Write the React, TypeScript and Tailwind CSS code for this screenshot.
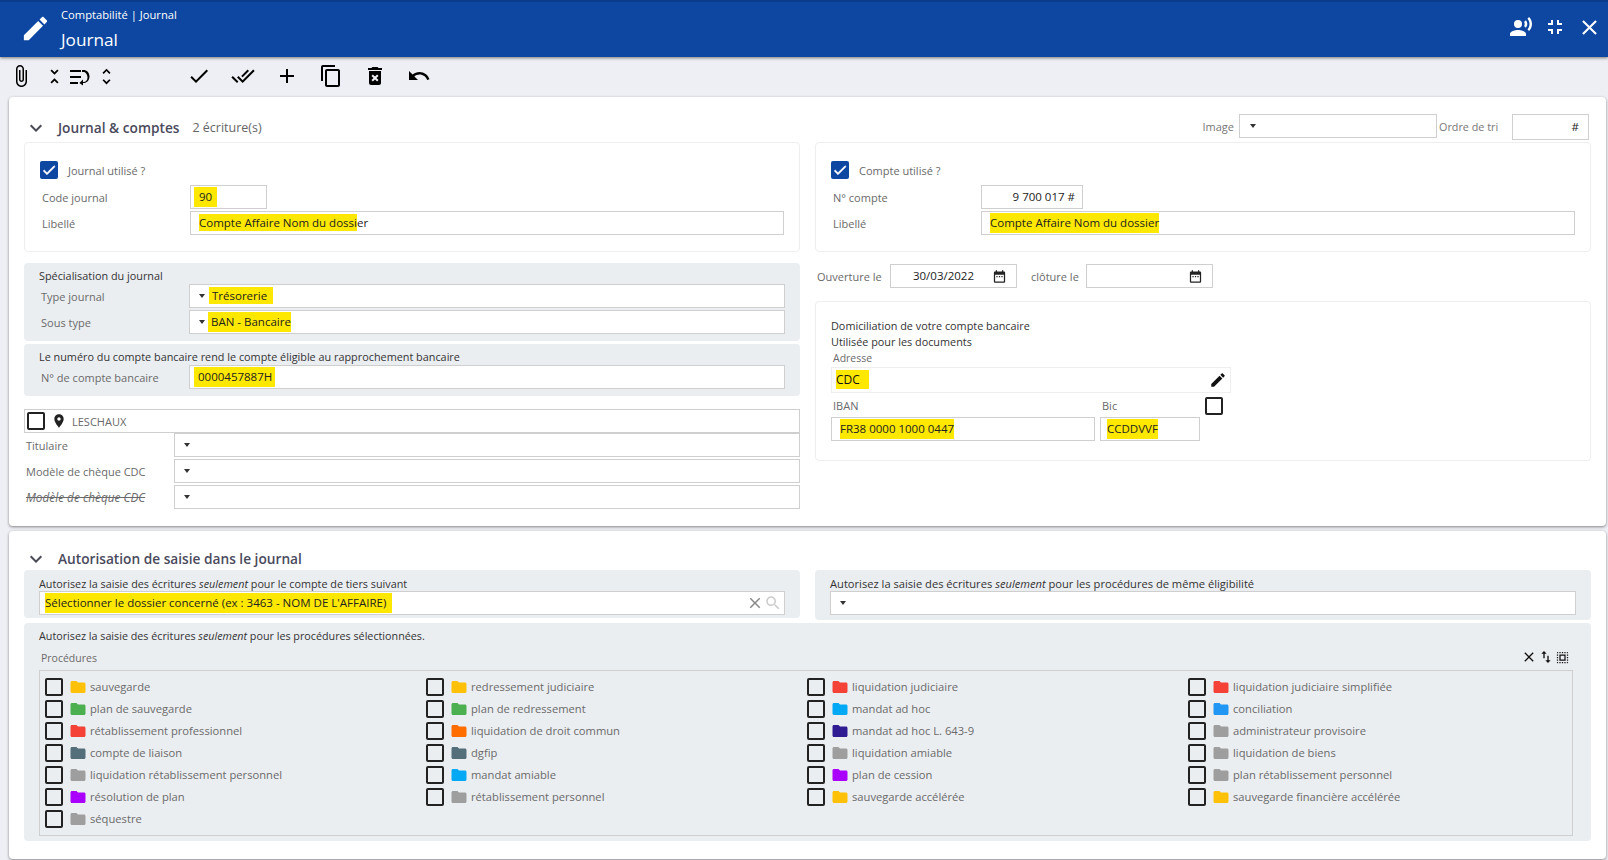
import React from "react";

const P: Record<string, string> = {
  edit: "M3 17.25V21h3.75L17.81 9.94l-3.75-3.75L3 17.25zM20.71 7.04c.39-.39.39-1.02 0-1.41l-2.34-2.34c-.39-.39-1.02-.39-1.41 0l-1.83 1.83 3.75 3.75 1.83-1.83z",
  voice: "M9 5a4 4 0 1 0 0 8a4 4 0 1 0 0-8z M9 15c-2.67 0-8 1.34-8 4v2h16v-2c0-2.66-5.33-4-8-4zm7.76-9.64l-1.68 1.69c.84 1.18.84 2.71 0 3.89l1.68 1.69c2.02-2.02 2.02-5.07 0-7.27zM20.07 2l-1.63 1.63c2.77 3.02 2.77 7.56 0 10.74L20.07 16c3.9-3.89 3.91-9.95 0-14z",
  fsExit: "M5 16h3v3h2v-5H5v2zm3-8H5v2h5V5H8v3zm6 11h2v-3h3v-2h-5v5zm2-11V5h-2v5h5V8h-3z",
  close: "M19 6.41L17.59 5 12 10.59 6.41 5 5 6.41 10.59 12 5 17.59 6.41 19 12 13.41 17.59 19 19 17.59 13.41 12z",
  attach: "M16.5 6v11.5c0 2.21-1.79 4-4 4s-4-1.79-4-4V5c0-1.38 1.12-2.5 2.5-2.5s2.5 1.12 2.5 2.5v10.5c0 .55-.45 1-1 1s-1-.45-1-1V6H10v9.5c0 1.38 1.12 2.5 2.5 2.5s2.5-1.12 2.5-2.5V5c0-2.21-1.79-4-4-4S7 2.79 7 5v12.5c0 3.04 2.46 5.5 5.5 5.5s5.5-2.46 5.5-5.5V6h-1.5z",
  unfoldLess: "M7.41 18.59L8.83 20 12 16.83 15.17 20l1.41-1.41L12 14l-4.59 4.59zm9.18-13.18L15.17 4 12 7.17 8.83 4 7.41 5.41 12 10l4.59-4.59z",
  wrap: "M2 6h11v2H2zM2 12h11v2H2zM2 18h8v2H2zM14 6h1.5c3.3 0 6 2.7 6 6.5s-2.7 6.5-6 6.5H15v2.6L11.4 19 15 15.4V18h.5c2.2 0 4-1.7 4-4.5S17.700 8 15.500 8H14z",
  unfoldMore: "M12 5.83L15.17 9l1.41-1.41L12 3 7.41 7.59 8.83 9 12 5.83zm0 12.34L8.83 15l-1.41 1.41L12 21l4.59-4.59L15.17 15 12 18.17z",
  check: "M9 16.17L4.83 12l-1.42 1.41L9 19 21 7l-1.41-1.41z",
  doneAll: "M18 7l-1.41-1.41-6.34 6.34 1.41 1.41L18 7zm4.24-1.41L11.66 16.17 7.48 12l-1.41 1.41L11.66 19l12-12-1.42-1.41zM.41 13.41L6 19l1.41-1.41L1.83 12 .41 13.41z",
  add: "M19 13h-6v6h-2v-6H5v-2h6V5h2v6h6v2z",
  copy: "M16 1H4c-1.1 0-2 .9-2 2v14h2V3h12V1zm3 4H8c-1.1 0-2 .9-2 2v14c0 1.1.9 2 2 2h11c1.1 0 2-.9 2-2V7c0-1.1-.9-2-2-2zm0 16H8V7h11v14z",
  del: "M6 19c0 1.1.9 2 2 2h8c1.1 0 2-.9 2-2V7H6v12zm2.46-7.12l1.41-1.41L12 12.59l2.12-2.12 1.41 1.41L13.41 14l2.12 2.12-1.41 1.41L12 15.41l-2.12 2.12-1.41-1.41L10.59 14l-2.13-2.12zM15.5 4l-1-1h-5l-1 1H5v2h14V4z",
  undo: "M12.5 8c-2.65 0-5.05.99-6.9 2.6L2 7v9h9l-3.62-3.62c1.39-1.16 3.16-1.88 5.12-1.88 3.54 0 6.55 2.31 7.6 5.5l2.37-.78C21.08 11.03 17.15 8 12.5 8z",
  expand: "M16.59 8.59L12 13.17 7.41 8.59 6 10l6 6 6-6z",
  place: "M12 2C8.13 2 5 5.13 5 9c0 5.25 7 13 7 13s7-7.75 7-13c0-3.87-3.13-7-7-7zm0 9.5c-1.38 0-2.5-1.12-2.5-2.5s1.12-2.5 2.5-2.5 2.5 1.12 2.5 2.5-1.12 2.5-2.5 2.5z",
  folder: "M10 4H4c-1.1 0-1.99.9-1.99 2L2 18c0 1.1.9 2 2 2h16c1.1 0 2-.9 2-2V8c0-1.1-.9-2-2-2h-8l-2-2z",
  date: "M9 11H7v2h2v-2zm4 0h-2v2h2v-2zm4 0h-2v2h2v-2zm2-7h-1V2h-2v2H8V2H6v2H5c-1.11 0-1.99.9-1.99 2L3 20c0 1.1.89 2 2 2h14c1.1 0 2-.9 2-2V6c0-1.1-.9-2-2-2zm0 16H5V9h14v11z",
  swap: "M16 17.01V10h-2v7.01h-3L15 21l4-3.99h-3zM9 3L5 6.99h3V14h2V6.99h3L9 3z",
  selectAll: "M3 5h2V3c-1.1 0-2 .9-2 2zm0 8h2v-2H3v2zm4 8h2v-2H7v2zM3 9h2V7H3v2zm10-6h-2v2h2V3zm6 0v2h2c0-1.1-.9-2-2-2zM5 21v-2H3c0 1.1.9 2 2 2zm-2-4h2v-2H3v2zM9 3H7v2h2V3zm2 18h2v-2h-2v2zm8-8h2v-2h-2v2zm0 8c1.1 0 2-.9 2-2h-2v2zm0-12h2V7h-2v2zm0 8h2v-2h-2v2zm-4 4h2v-2h-2v2zm0-16h2V3h-2v2zM7 17h10V7H7v10zm2-8h6v6H9V9z",
  search: "M15.5 14h-.79l-.28-.27C15.41 12.59 16 11.11 16 9.5 16 5.91 13.09 3 9.5 3S3 5.91 3 9.5 5.91 16 9.5 16c1.61 0 3.09-.59 4.23-1.57l.27.28v.79l5 4.99L20.49 19l-4.99-5zm-6 0C7.01 14 5 11.99 5 9.5S7.01 5 9.5 5 14 7.01 14 9.5 11.99 14 9.5 14z",
};

function Icon({ d, size = 24, color = "#000", bold = false }: { d: string; size?: number; color?: string; bold?: boolean }) {
  return (
    <svg width={size} height={size} viewBox="0 0 24 24" fill={color} className="shrink-0">
      <path d={P[d]} fillRule="evenodd" stroke={bold ? color : "none"} strokeWidth={bold ? 1 : 0} />
    </svg>
  );
}

function Hl({ children, className = "" }: { children: React.ReactNode; className?: string }) {
  return <span className={"bg-[#ffe800] py-[1px] " + className}>{children}</span>;
}

function Arrow() {
  return <span className="shrink-0 w-0 h-0 ml-[1px] border-x-[3.5px] border-x-transparent border-t-[4px] border-t-[#333]" />;
}

function Box({ className = "", children }: { className?: string; children?: React.ReactNode }) {
  return (
    <div className={"h-[24px] bg-white border border-[#cfcfcf] flex items-center text-[#222] whitespace-nowrap " + className}>
      {children}
    </div>
  );
}

function Select({ className = "", children }: { className?: string; children?: React.ReactNode }) {
  return (
    <Box className={"pl-[8px] gap-[3px] " + className}>
      <Arrow />
      {children}
    </Box>
  );
}

function Check({ on = false }: { on?: boolean }) {
  return on ? (
    <span className="shrink-0 w-[18px] h-[18px] rounded-[2px] bg-[#0d47a1] flex items-center justify-center">
      <Icon d="check" size={16} color="#fff" bold />
    </span>
  ) : (
    <span className="block shrink-0 w-[18px] h-[18px] rounded-[2px] border-2 border-[#222] bg-transparent" />
  );
}

function Label({ className = "", children }: { className?: string; children: React.ReactNode }) {
  return <div className={"text-[#6a6a6a] text-[11px] whitespace-nowrap pt-[2px] " + className}>{children}</div>;
}

function Row({ label, x = "pl-[17px]", w, children }: { label: React.ReactNode; x?: string; w: string; children: React.ReactNode }) {
  return (
    <div className="flex items-center h-[24px] mb-[2px]">
      <Label className={x + " " + w}>{label}</Label>
      {children}
    </div>
  );
}

function Section({ title, extra, right }: { title: string; extra?: string; right?: React.ReactNode }) {
  return (
    <div className="flex items-center">
      <span className="w-[34px]"><Icon d="expand" size={24} color="#4a4a56" /></span>
      <span className="font-semibold text-[13.7px] pt-[1px] text-[#4a4a5c] whitespace-nowrap">{title}</span>
      {extra && <span className="ml-[13px] pt-[1px] text-[12.5px] text-[#666]">{extra}</span>}
      {right}
    </div>
  );
}

const Note = "h-[21px] pt-[5px] leading-[16px] text-[#333] text-[10.85px] whitespace-nowrap";

const cols: [string, string][] = [
  ["sauvegarde", "#ffc107"], ["redressement judiciaire", "#ffc107"], ["liquidation judiciaire", "#f44336"], ["liquidation judiciaire simplifiée", "#f44336"],
  ["plan de sauvegarde", "#4caf50"], ["plan de redressement", "#4caf50"], ["mandat ad hoc", "#03a9f4"], ["conciliation", "#2196f3"],
  ["rétablissement professionnel", "#f44336"], ["liquidation de droit commun", "#ff6d00"], ["mandat ad hoc L. 643-9", "#311b92"], ["administrateur provisoire", "#9e9e9e"],
  ["compte de liaison", "#546e7a"], ["dgfip", "#546e7a"], ["liquidation amiable", "#9e9e9e"], ["liquidation de biens", "#9e9e9e"],
  ["liquidation rétablissement personnel", "#9e9e9e"], ["mandat amiable", "#03a9f4"], ["plan de cession", "#aa00ff"], ["plan rétablissement personnel", "#9e9e9e"],
  ["résolution de plan", "#aa00ff"], ["rétablissement personnel", "#9e9e9e"], ["sauvegarde accélérée", "#ffc107"], ["sauvegarde financière accélérée", "#ffc107"],
  ["séquestre", "#9e9e9e"],
];

export default function App() {
  return (
    <div className="w-[1608px] h-[860px] overflow-hidden bg-[#eeeff4] font-['Open_Sans',sans-serif] text-[11.5px] text-[#333]">
      {/* Header */}
      <header className="h-[57px] bg-[#0d47a1] border-t-2 border-[#0b3d8c] shadow-[0_1px_3px_rgba(0,0,0,0.5)] flex items-center text-white relative">
        <div className="ml-[20px] w-[41px] mt-[-2px]"><Icon d="edit" size={31} color="#fff" /></div>
        <div className="flex flex-col">
          <span className="text-[11.2px] leading-[16px] mt-[-1px]">Comptabilité | Journal</span>
          <span className="text-[17.2px] leading-[24px] mt-[5px]">Journal</span>
        </div>
        <div className="ml-auto flex items-center mt-[-5px] mr-[2px]">
          <span className="w-[34px] flex justify-center"><Icon d="voice" size={24} color="#fff" /></span>
          <span className="w-[34px] flex justify-center"><Icon d="fsExit" size={24} color="#fff" /></span>
          <span className="w-[34px] flex justify-center"><Icon d="close" size={25} color="#fff" /></span>
        </div>
      </header>

      {/* Toolbar */}
      <div className="h-[40px] flex items-center pb-[2px]">
        <span className="ml-[7px] w-[28px] flex justify-center"><Icon d="attach" size={24} /></span>
        <span className="ml-[7px] w-[24px] flex justify-center"><Icon d="unfoldLess" size={21} /></span>
        <span className="w-[28px] flex justify-center"><Icon d="wrap" size={24} /></span>
        <span className="w-[24px] flex justify-center"><Icon d="unfoldMore" size={21} /></span>
        <div className="ml-[59px] flex">
          {["check", "doneAll", "add", "copy", "del", "undo"].map((n) => (
            <span key={n} className="w-[44px] flex justify-center"><Icon d={n} size={24} /></span>
          ))}
        </div>
      </div>

      {/* Card 1 */}
      <section className="ml-[9px] w-[1597px] h-[429px] bg-white rounded-[4px] shadow-[0_1px_3px_rgba(0,0,0,0.45)] px-[15px]">
        <div className="h-[45px] pt-[18px]">
          <Section
            title="Journal & comptes"
            extra="2 écriture(s)"
            right={
              <div className="ml-auto flex items-center mt-[-3px] mr-[2px]">
                <span className="text-[#777] text-[11px] mr-[5px] pt-[3px]">Image</span>
                <Select className="w-[198px] pl-[9px]" />
                <span className="text-[#777] text-[10.8px] ml-[2px] w-[73px] pt-[3px]">Ordre de tri</span>
                <Box className="w-[77px] h-[26px] mt-[2px] justify-end pr-[9px]">#</Box>
              </div>
            }
          />
        </div>

        <div className="grid grid-cols-2 gap-x-[15px]">
          {/* Left column */}
          <div>
            <div className="h-[110px] border border-[#eee] rounded-[4px] pt-[18px] pr-[15px]">
              <div className="flex items-center ml-[15px] h-[18px] mb-[6px]">
                <Check on />
                <Label className="ml-[10px]">Journal utilisé ?</Label>
              </div>
              <Row label="Code journal" w="w-[165px]"><Box className="w-[77px] pl-[8px]"><Hl className="ml-[-5px] px-[5px]">90</Hl></Box></Row>
              <Row label="Libellé" w="w-[165px]">
                <Box className="flex-1 pl-[8px]"><span><Hl>Compte Affaire Nom du dossi</Hl>er</span></Box>
              </Row>
            </div>

            <div className="mt-[11px] h-[78px] bg-[#ebeef1] rounded-[4px] pl-[15px] pr-[15px]">
              <div className={Note}>Spécialisation du journal</div>
              <Row label="Type journal" x="pl-[2px]" w="w-[150px]">
                <Select className="flex-1"><span className="ml-[1px]"><Hl>&nbsp;Trésorerie &nbsp;</Hl></span></Select>
              </Row>
              <Row label="Sous type" x="pl-[2px]" w="w-[150px]">
                <Select className="flex-1"><Hl>&nbsp;BAN - Bancaire</Hl></Select>
              </Row>
            </div>

            <div className="mt-[3px] h-[52px] bg-[#ebeef1] rounded-[4px] pl-[15px] pr-[15px]">
              <div className={Note}>Le numéro du compte bancaire rend le compte éligible au rapprochement bancaire</div>
              <Row label="N° de compte bancaire" x="pl-[2px]" w="w-[150px]">
                <Box className="flex-1 pl-[8px]"><Hl className="ml-[-4px] pl-[4px]">0000457887H&nbsp;</Hl></Box>
              </Row>
            </div>

            <div className="mt-[13px] h-[24px] border border-[#cfcfcf] flex items-center pl-[2px]">
              <Check />
              <span className="ml-[6px]"><Icon d="place" size={16} color="#222" /></span>
              <Label className="ml-[5px]">LESCHAUX</Label>
            </div>
            <div className="flex items-center h-[24px] mb-[2px]">
              <Label className="w-[150px] pl-[2px]">Titulaire</Label>
              <Select className="flex-1" />
            </div>
            <div className="flex items-center h-[24px] mb-[2px]">
              <Label className="w-[150px] pl-[2px]">Modèle de chèque CDC</Label>
              <Select className="flex-1" />
            </div>
            <div className="flex items-center h-[24px]">
              <Label className="w-[150px] pl-[2px] line-through italic !text-[11.8px]">Modèle de chèque CDC</Label>
              <Select className="flex-1" />
            </div>
          </div>

          {/* Right column */}
          <div>
            <div className="h-[110px] border border-[#eee] rounded-[4px] pt-[18px] pr-[15px]">
              <div className="flex items-center ml-[15px] h-[18px] mb-[6px]">
                <Check on />
                <Label className="ml-[10px]">Compte utilisé ?</Label>
              </div>
              <Row label="N° compte" w="w-[165px]"><Box className="w-[102px] justify-end pr-[7px]">9 700 017 #</Box></Row>
              <Row label="Libellé" w="w-[165px]">
                <Box className="flex-1 pl-[8px]"><Hl>Compte Affaire Nom du dossier</Hl></Box>
              </Row>
            </div>

            <div className="mt-[12px] h-[24px] flex items-center">
              <Label className="ml-[2px] w-[73px]">Ouverture le</Label>
              <Box className="w-[127px] justify-end pr-[9px] gap-[18px]">
                30/03/2022 <Icon d="date" size={15} color="#222" />
              </Box>
              <Label className="ml-[14px] w-[55px]">clôture le</Label>
              <Box className="w-[127px] justify-end pr-[9px]"><Icon d="date" size={15} color="#222" /></Box>
            </div>

            <div className="mt-[13px] h-[160px] border border-[#eee] rounded-[4px] pl-[15px] pt-[16px]">
              <div className="leading-[16px] text-[#333] text-[10.85px]">Domiciliation de votre compte bancaire</div>
              <div className="leading-[16px] text-[#333] text-[10.85px]">Utilisée pour les documents</div>
              <div className="leading-[16px] pl-[2px] text-[#6a6a6a] text-[10.5px]">Adresse</div>
              <div className="mt-[1px] w-[400px] h-[26px] border border-[#eee] flex items-center justify-between pl-[4px] pr-[3px]">
                <span className="font-medium text-[12px] text-[#111]"><Hl>CDC &nbsp;&nbsp;</Hl></span>
                <Icon d="edit" size={18} color="#111" />
              </div>
              <div className="flex w-[400px] h-[24px] items-center relative">
                <Label className="pl-[2px] w-[271px]">IBAN</Label>
                <Label>Bic</Label>
                <span className="absolute block left-[374px] top-[4px]"><Check /></span>
              </div>
              <div className="flex gap-[5px]">
                <Box className="w-[264px] pl-[8px]"><Hl>FR38 0000 1000 0447</Hl></Box>
                <Box className="w-[100px] pl-[6px]"><Hl>CCDDVVF</Hl></Box>
              </div>
            </div>
          </div>
        </div>
      </section>

      {/* Card 2 */}
      <section className="ml-[9px] mt-[5px] w-[1597px] h-[328px] bg-white rounded-[4px] shadow-[0_1px_3px_rgba(0,0,0,0.45)] px-[15px]">
        <div className="h-[39px] pt-[16px]">
          <Section title="Autorisation de saisie dans le journal" />
        </div>
        <div className="grid grid-cols-2 gap-x-[15px] items-start">
          <div className="h-[48px] bg-[#ebeef1] rounded-[4px] px-[15px]">
            <div className="h-[21px] pt-[6px] leading-[16px] text-[#333] text-[10.8px] whitespace-nowrap">Autorisez la saisie des écritures <em>seulement</em> pour le compte de tiers suivant</div>
            <Box className="pl-[5px] pr-[2px] justify-between">
              <Hl>Sélectionner le dossier concerné (ex : 3463 - NOM DE L'AFFAIRE) &nbsp;</Hl>
              <span className="flex items-center">
                <Icon d="close" size={18} color="#888" />
                <Icon d="search" size={18} color="#ccc" />
              </span>
            </Box>
          </div>
          <div className="h-[50px] bg-[#ebeef1] rounded-[4px] px-[15px]">
            <div className="h-[21px] pt-[6px] leading-[16px] text-[#333] text-[11.15px] whitespace-nowrap">Autorisez la saisie des écritures <em>seulement</em> pour les procédures de même éligibilité</div>
            <Select />
          </div>
        </div>
        <div className="mt-[3px] h-[218px] bg-[#ebeef1] rounded-[4px] pl-[15px] pr-[18px]">
          <div className="h-[21px] pt-[5px] leading-[16px] text-[#333] text-[10.75px] whitespace-nowrap">Autorisez la saisie des écritures <em>seulement</em> pour les procédures sélectionnées.</div>
          <div className="h-[26px] flex items-center justify-between pl-[2px] pr-[3px]">
            <span className="text-[#6a6a6a] text-[10.5px] pt-[4px]">Procédures</span>
            <span className="flex items-center gap-[1px]">
              <Icon d="close" size={16} color="#111" />
              <Icon d="swap" size={16} color="#111" />
              <Icon d="selectAll" size={15} color="#111" />
            </span>
          </div>
          <div className="h-[166px] border border-[#cfcfcf] pl-[5px] pt-[5px] grid grid-cols-[381px_381px_381px_1fr] auto-rows-[22px]">
            {cols.map(([t, c]) => (
              <div key={t} className="flex items-center">
                <Check />
                <span className="ml-[6px]"><Icon d="folder" size={18} color={c} /></span>
                <span className="ml-[3px] text-[#6a6a6a] text-[11.2px] whitespace-nowrap">{t}</span>
              </div>
            ))}
          </div>
        </div>
      </section>
    </div>
  );
}
